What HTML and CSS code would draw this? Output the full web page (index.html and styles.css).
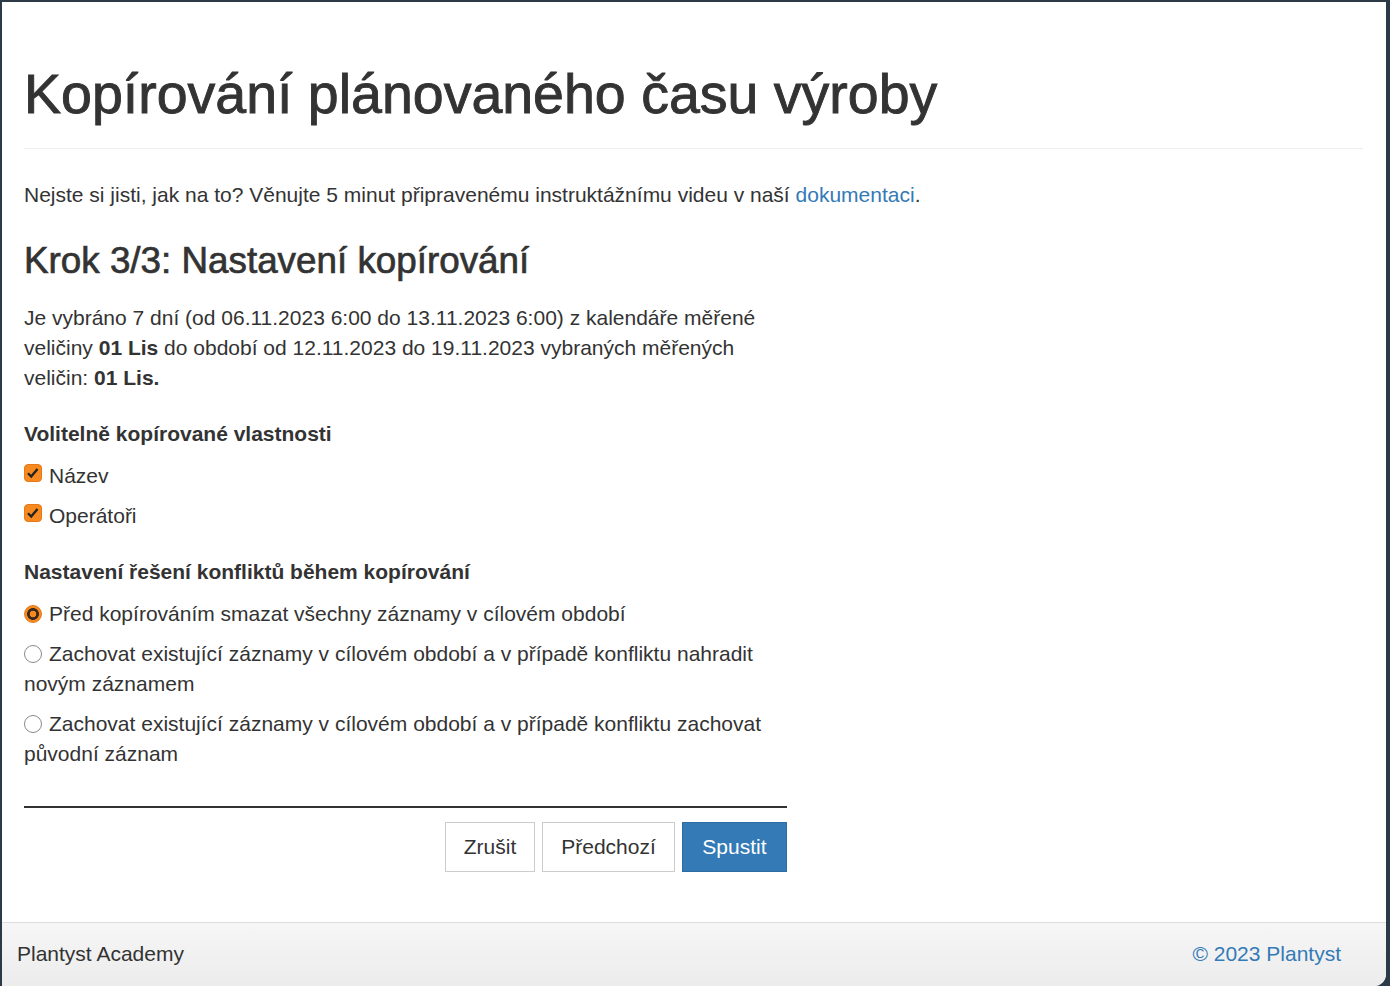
FILE: index.html
```html
<!DOCTYPE html>
<html lang="cs">
<head>
    <meta charset="UTF-8">
    <meta name="viewport" content="width=device-width, initial-scale=1.0">
    <title>Kopírování plánovaného času výroby</title>
    <link rel="stylesheet" href="styles.css">
</head>
<body>

<div class="window">
    <main class="content">
        <h1 class="page-header">Kopírování plánovaného času výroby</h1>

        <p class="intro">Nejste si jisti, jak na to? Věnujte 5 minut připravenému instruktážnímu videu v naší <a href="#">dokumentaci</a>.</p>

        <div class="wizard">
            <h2>Krok 3/3: Nastavení kopírování</h2>

            <p class="summary">Je vybráno 7 dní (od 06.11.2023 6:00 do 13.11.2023 6:00) z kalendáře měřené veličiny <b>01 Lis</b> do období od 12.11.2023 do 19.11.2023 vybraných měřených veličin: <b>01 Lis.</b></p>

            <div class="group">
                <div class="group-title">Volitelně kopírované vlastnosti</div>
                <label class="option"><input type="checkbox" checked>Název</label>
                <label class="option"><input type="checkbox" checked>Operátoři</label>
            </div>

            <div class="group">
                <div class="group-title">Nastavení řešení konfliktů během kopírování</div>
                <label class="option"><input type="radio" name="conflict" checked>Před kopírováním smazat všechny záznamy v cílovém období</label>
                <label class="option"><input type="radio" name="conflict">Zachovat existující záznamy v cílovém období a v případě konfliktu nahradit novým záznamem</label>
                <label class="option"><input type="radio" name="conflict">Zachovat existující záznamy v cílovém období a v případě konfliktu zachovat původní záznam</label>
            </div>

            <div class="actions">
                <button class="btn">Zrušit</button>
                <button class="btn">Předchozí</button>
                <button class="btn btn-primary">Spustit</button>
            </div>
        </div>
    </main>

    <footer class="footer">
        <span>Plantyst Academy</span>
        <a href="#">© 2023 Plantyst</a>
    </footer>
</div>

</body>
</html>
```

FILE: styles.css
```css
body {
    margin: 0;
    background-color: #2c3a48;
    font-family: "Liberation Sans", Arial, sans-serif;
    font-size: 21px;
    line-height: 30px;
    color: #333;
}
a {
    color: #337ab7;
    text-decoration: none;
}
.window {
    margin: 2px 4px 0 2px;
    min-height: calc(100vh - 2px);
    background-color: #fff;
    display: flex;
    flex-direction: column;
    border-bottom-right-radius: 12px;
    overflow: hidden;
}
.content {
    flex: 1;
    padding: 0 23px 0 22px;
}
.page-header {
    margin: 61px 0 0;
    padding-bottom: 23px;
    border-bottom: 1px solid #eee;
    font-size: 55.5px;
    line-height: 62px;
    font-weight: normal;
    -webkit-text-stroke: 0.9px #333; /* medium weight look */
}
.intro {
    margin: 31px 0 0;
}
.wizard {
    max-width: 763px;
}
.wizard h2 {
    margin: 30px 0 0;
    font-size: 36.8px;
    line-height: 41px;
    font-weight: normal;
    -webkit-text-stroke: 0.7px #333;
}
.summary {
    margin: 22px 0 0;
}
.group-title {
    margin-top: 26px;
    padding-bottom: 2px;
    font-weight: bold;
}
.option {
    display: block;
    margin-top: 10px;
}
.option input {
    appearance: none;
    -webkit-appearance: none;
    width: 18px;
    height: 18px;
    margin: 0 7px 0 0;
    background-color: #fff;
    border: 1px solid #8a8a8a;
}
input[type="checkbox"] {
    border-radius: 4px;
    vertical-align: 1px;
}
input[type="checkbox"]:checked {
    border-color: #e8791a;
    background: #f6891f url("data:image/svg+xml,%3Csvg xmlns='http://www.w3.org/2000/svg' viewBox='0 0 18 18'%3E%3Cpath d='M4 9.3l3.2 3.2 6.3-7.6' fill='none' stroke='%23222' stroke-width='2.3'/%3E%3C/svg%3E") center / 18px 18px no-repeat;
}
input[type="radio"] {
    border-radius: 50%;
    vertical-align: -2px;
}
input[type="radio"]:checked {
    border-color: #e8791a;
    background: radial-gradient(circle, #f6891f 0 3px, #3b2a1c 3.6px 5.6px, #f6891f 6.2px);
}
.actions {
    margin-top: 37px;
    padding-top: 14px;
    border-top: 2px solid #333;
    display: flex;
    justify-content: flex-end;
    gap: 7px;
}
.btn {
    padding: 9px 18px;
    font-family: inherit;
    font-size: 21px;
    line-height: 30px;
    color: #333;
    background-color: #fff;
    border: 1px solid #ccc;
    cursor: pointer;
}
.btn-primary {
    padding: 9px 19.5px;
    color: #fff;
    background-color: #337ab7;
    border-color: #2e6da4;
}
.footer {
    display: flex;
    justify-content: space-between;
    padding: 16px 45px 17px 15px;
    border-top: 1px solid #ddd;
    background: linear-gradient(#f6f6f6, #ececec);
}
```
